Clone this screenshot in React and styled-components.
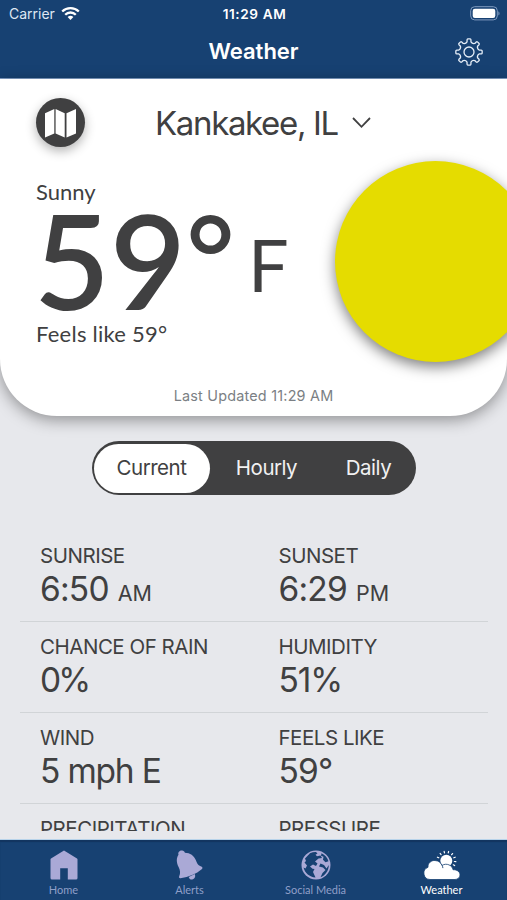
import React from 'react';
import styled, { createGlobalStyle, css } from 'styled-components';

const GlobalStyle = createGlobalStyle`
  * { box-sizing: border-box; }
  body { margin: 0; background: #e7e8ec; }
`;

const ink = '#404041';
const navy = '#174172';

const Screen = styled.div`
  width: 507px;
  height: 900px;
  display: flex;
  flex-direction: column;
  overflow: hidden;
  background: #e7e8ec;
  color: ${ink};
  font-family: Inter, "Liberation Sans", sans-serif;
  white-space: nowrap;
`;

const Header = styled.header`
  height: 79px;
  background: ${navy};
  border-bottom: 1px solid #7f9cc4;
  color: #fff;
  flex: none;
`;

const StatusBar = styled.div`
  height: 27px;
  display: grid;
  grid-template-columns: 1fr auto 1fr;
  align-items: center;
  padding: 0 7px 0 9px;
  font-size: 14px;
`;

const Carrier = styled.div`
  display: flex;
  align-items: center;
  gap: 6px;
  color: #dfe7f2;
`;

const Clock = styled.div`
  font-size: 13.6px;
  font-weight: 600;
  letter-spacing: 0.6px;
`;

const BatterySlot = styled.div`
  display: flex;
  justify-content: flex-end;
`;

const NavBar = styled.div`
  height: 50px;
  display: grid;
  grid-template-columns: 1fr auto 1fr;
  align-items: center;
  padding: 0 24px;
`;

const NavTitle = styled.h1`
  grid-column: 2;
  margin: 0 0 2px;
  font-size: 22px;
  line-height: 48px;
  font-weight: 600;
`;

const IconButton = styled.button`
  justify-self: end;
  display: flex;
  padding: 0;
  border: 0;
  background: none;
  color: #e6eef8;
`;

const Card = styled.section`
  height: 337px;
  flex: none;
  display: flex;
  flex-direction: column;
  padding-top: 19px;
  background: #fff;
  border-radius: 0 0 57px 57px;
  box-shadow: 0 4px 16px rgba(0, 0, 0, 0.38);
`;

const LocationRow = styled.div`
  height: 49px;
  display: flex;
  align-items: center;
  padding-left: 36px;
`;

const MapButton = styled.button`
  width: 49px;
  height: 49px;
  display: grid;
  place-items: center;
  padding: 1px 0 0;
  border: 0;
  border-radius: 50%;
  background: ${ink};
  box-shadow: 0 4px 11px rgba(0, 0, 0, 0.3);
`;

const Location = styled.div`
  display: flex;
  align-items: center;
  gap: 14px;
  margin-left: 70px;
  font-size: 33px;
  letter-spacing: -1.35px;
`;

const Conditions = styled.div`
  height: 201px;
  margin-top: 14px;
  display: grid;
  grid-template-columns: 299px 201px;
  padding-left: 36px;
`;

const Readings = styled.div`
  padding-top: 18px;
  font-family: Lato, "Liberation Sans", sans-serif;
`;

const Summary = styled.div`
  font-size: 22px;
  line-height: 26px;
  letter-spacing: ${(p) => p.$track}px;
`;

const Temperature = styled.div`
  height: 110px;
  margin: 0 0 6px -2px;
  display: flex;
  align-items: center;
  font-size: 131px;
  line-height: 110px;
  font-weight: 600;
`;

const Degree = styled.span`
  margin-bottom: 9px;
  font-size: 118px;
`;

const Unit = styled.span`
  margin: 8px 0 0 13px;
  font-size: 72px;
  line-height: 72px;
  font-weight: 400;
`;

const Sun = styled.div`
  width: 201px;
  height: 201px;
  border-radius: 50%;
  background: #e5dc00;
  box-shadow: 0 5px 14px rgba(0, 0, 0, 0.5);
`;

const Updated = styled.div`
  margin-top: 23px;
  line-height: 22px;
  text-align: center;
  font-size: 14.4px;
  letter-spacing: 0.21px;
  color: #7b7f84;
`;

const Segments = styled.div`
  width: 324px;
  height: 54px;
  flex: none;
  align-self: center;
  margin: 25px 0 36px;
  display: grid;
  grid-template-columns: 116px 114px 90px;
  padding: 2.5px 2px;
  border-radius: 27px;
  background: ${ink};
`;

const Segment = styled.button`
  padding: 0 0 2px;
  border: 0;
  border-radius: 25px;
  background: none;
  color: #f1f1f1;
  font: 400 20.5px Inter, "Liberation Sans", sans-serif;
  letter-spacing: -0.5px;
  ${(p) => p.$active && css`
    background: #fff;
    color: ${ink};
  `}
`;

const Details = styled.div`
  height: 300px;
  flex: none;
  overflow: hidden;
  margin: 0 19px 0 20px;
`;

const DetailRow = styled.div`
  height: 91px;
  display: grid;
  grid-template-columns: 238.5px 1fr;
  padding: 13px 0 0 20px;
  border-bottom: 1px solid #d1d4d7;
`;

const Label = styled.div`
  font-size: 20.5px;
  line-height: 24px;
  letter-spacing: -0.48px;
`;

const Value = styled.div`
  font-size: 33.5px;
  line-height: 42px;
  letter-spacing: ${(p) => p.$track ?? -0.8}px;
`;

const Meridiem = styled.span`
  margin-left: 9px;
  font-size: 21.5px;
  letter-spacing: 0;
`;

const TabBar = styled.nav`
  height: 61px;
  margin-top: auto;
  flex: none;
  display: grid;
  grid-template-columns: repeat(4, 126px);
  padding-left: 0.5px;
  background: ${navy};
  border-top: 1px solid #b8d3ea;
  box-shadow: inset 0 2px 1px #123560;
`;

const Tab = styled.a`
  display: flex;
  flex-direction: column;
  align-items: center;
  padding-top: 10px;
  color: ${(p) => (p.$active ? '#fff' : '#aaa9d6')};
`;

const TabIcon = styled.span`
  height: 32px;
  display: flex;
  align-items: flex-start;
`;

const TabLabel = styled.span`
  font: 400 11px/16px Lato, "Liberation Sans", sans-serif;
  color: ${(p) => (p.$active ? '#fff' : '#8f9fc8')};
`;

const WifiIcon = () => (
  <svg width="19" height="15" viewBox="0 0 19 15" fill="none" stroke="#fff" strokeWidth="2.3">
    <path d="M1.2 5.5a11.8 11.8 0 0 1 16.6 0" />
    <path d="M4.2 8.7a7.5 7.5 0 0 1 10.6 0" />
    <path d="M9.5 14 6.6 11.1a4.1 4.1 0 0 1 5.8 0Z" fill="#fff" stroke="none" />
  </svg>
);

const BatteryIcon = () => (
  <svg width="30" height="15" viewBox="0 0 30 15">
    <rect x="0.7" y="0.7" width="26.6" height="13.2" rx="4" fill="none" stroke="#7f9abf" />
    <rect x="2.7" y="2.7" width="22.6" height="9.2" rx="2.2" fill="#fff" />
    <path d="M28.4 5.2c1.5.8 1.5 3.6 0 4.4Z" fill="#7f9abf" />
  </svg>
);

const gearPath = (() => {
  const pt = (r, deg) => {
    const a = (deg * Math.PI) / 180;
    return `${(14 + r * Math.sin(a)).toFixed(2)} ${(14 - r * Math.cos(a)).toFixed(2)}`;
  };
  let d = '';
  for (let i = 0; i < 8; i += 1) {
    const c = i * 45;
    d += `${i ? 'L' : 'M'}${pt(10.3, c - 11)}L${pt(12.4, c - 9)}Q${pt(13.2, c - 8)} ${pt(13.2, c - 5)}`;
    d += `L${pt(13.2, c + 5)}Q${pt(13.2, c + 8)} ${pt(12.4, c + 9)}L${pt(10.3, c + 11)}`;
    d += `Q${pt(8.6, c + 22.5)} ${pt(10.3, c + 34)}`;
  }
  return `${d}Z`;
})();

const GearIcon = () => (
  <svg width="28" height="28" viewBox="0 0 28 28" fill="none" stroke="currentColor" strokeWidth="1.3" strokeLinejoin="round">
    <path d={gearPath} />
    <circle cx="14" cy="14" r="5" />
  </svg>
);

const MapIcon = () => (
  <svg width="33" height="31" viewBox="0 0 33 31" fill="#fff">
    <path d="M1 5.2 10.3 1v24.4L1 29.6Z" />
    <path d="M11.6 1 20.7 5.2v24.4l-9.1-4.2Z" />
    <path d="M22.5 5.2 32 1v24.4l-9.5 4.2Z" />
  </svg>
);

const ChevronIcon = () => (
  <svg width="19" height="12" viewBox="0 0 19 12" fill="none" stroke={ink} strokeWidth="1.8">
    <path d="m1 1 8.5 8.8L18 1" />
  </svg>
);

const HomeIcon = () => (
  <svg width="28" height="30" viewBox="0 0 28 30" fill="currentColor">
    <path d="M14 .5 27 8.6a1 1 0 0 1 .5 1V28a1.5 1.5 0 0 1-1.5 1.5h-8.2V18.3h-7.6v11.2H2A1.5 1.5 0 0 1 .5 28V9.6a1 1 0 0 1 .5-1Z" />
  </svg>
);

const BellIcon = () => (
  <svg width="27" height="30" viewBox="0 0 27 30" fill="currentColor">
    <path d="M2.5 4.7C1.6 2.2 4 .3 6.1.6c1.5.1 2.3 1 2.8 2.1 5.3.1 9.2 3 11 7.5 1.3 3.5 2.2 5 5.3 6.2 1.5.6 1.6 1.6.8 2.5C20 24 13 27 4.5 28.2c-1.2.1-1.8-.8-1.3-2 1.4-3.3 1-5.8-.5-9C.3 12.3.2 8 2.5 4.7Z" />
    <path d="M12.7 26.900c2.2-.7 4.2-1.6 6-2.8 1.3 2.5-.1 5.3-2.6 5.4-1.8.1-3-1-3.400-2.600Z" />
  </svg>
);

const GlobeIcon = () => (
  <svg width="30" height="30" viewBox="0 0 30 30">
    <circle cx="15" cy="15" r="14.5" fill="currentColor" />
    <g fill={navy}>
      <path d="M9 3.3c2-.9 4-1.3 6-1.2l1.500 1.500-2 1.200 1.500 1.500 3.500-.8 1.500 2.500-3.500.5-3.500 3 2.500 2-1.500 2.500-3-1.500-3 2 2.500 2.200 2 .3-1.500 3 2.500 5.500c-6-.5-10.500-4.300-12-10l2 1 1.500-3-2.500-3 1.500-1.500-1-2.500Z" />
      <path d="M20.500 3.300c3.500 1.500 6 4.600 7 8l-3 1-2.500-2.500.5-3-2.500-1Z" />
      <path d="M27.800 15c0 5.700-3.500 10.500-8.300 12.200l2-4.200 3-3-2.500-2.500-4-1 1.500-3 3.500 1.500 2.500 3.500Z" />
    </g>
  </svg>
);

const sunRays = [-95, -68, -40, -13, 14, 41, 68, 95, 120];

const WeatherIcon = () => (
  <svg width="38" height="31" viewBox="0 0 38 31">
    <g stroke="#fff" strokeWidth="1.2" strokeLinecap="round">
      {sunRays.map((a) => (
        <path key={a} d="M23.300 1.200v1.500" transform={`rotate(${a} 23.3 10.8)`} />
      ))}
    </g>
    <circle cx="23.3" cy="10.8" r="6" fill="#fff" />
    <path
      d="M7 29.5a6.300 6.300 0 0 1-2-12.200c-.3-4.300 3.300-7.100 7-6.800 3.400.2 5.800 2 7 4.900 4.600-2.800 10.300-.1 11 4.300 4-.2 7 2 7 5.200 0 2.700-2.300 4.600-5 4.600Z"
      fill="#fff"
      stroke={navy}
      strokeWidth=".8"
    />
    <path d="M19 15.400c.6.900.9 1.800.9 2.700" fill="none" stroke={navy} strokeWidth=".9" />
  </svg>
);

const details = [
  [
    { label: 'SUNRISE', value: '6:50', suffix: 'AM' },
    { label: 'SUNSET', value: '6:29', suffix: 'PM' },
  ],
  [
    { label: 'CHANCE OF RAIN', value: '0%', track: -3 },
    { label: 'HUMIDITY', value: '51%', track: -1.1 },
  ],
  [
    { label: 'WIND', value: '5 mph E', track: -1.2 },
    { label: 'FEELS LIKE', value: '59°' },
  ],
  [
    { label: 'PRECIPITATION' },
    { label: 'PRESSURE' },
  ],
];

const tabs = [
  { label: 'Home', Icon: HomeIcon },
  { label: 'Alerts', Icon: BellIcon },
  { label: 'Social Media', Icon: GlobeIcon },
  { label: 'Weather', Icon: WeatherIcon, active: true },
];

export default function App() {
  return (
    <Screen>
      <GlobalStyle />
      <Header>
        <StatusBar>
          <Carrier>Carrier <WifiIcon /></Carrier>
          <Clock>11:29 AM</Clock>
          <BatterySlot><BatteryIcon /></BatterySlot>
        </StatusBar>
        <NavBar>
          <NavTitle>Weather</NavTitle>
          <IconButton aria-label="Settings"><GearIcon /></IconButton>
        </NavBar>
      </Header>
      <Card>
        <LocationRow>
          <MapButton aria-label="Map"><MapIcon /></MapButton>
          <Location>Kankakee, IL <ChevronIcon /></Location>
        </LocationRow>
        <Conditions>
          <Readings>
            <Summary $track={0}>Sunny</Summary>
            <Temperature>59<Degree>°</Degree><Unit>F</Unit></Temperature>
            <Summary $track={0.25}>Feels like 59°</Summary>
          </Readings>
          <Sun />
        </Conditions>
        <Updated>Last Updated 11:29 AM</Updated>
      </Card>
      <Segments>
        <Segment $active>Current</Segment>
        <Segment>Hourly</Segment>
        <Segment>Daily</Segment>
      </Segments>
      <Details>
        {details.map((row) => (
          <DetailRow key={row[0].label}>
            {row.map((d) => (
              <div key={d.label}>
                <Label>{d.label}</Label>
                {d.value && (
                  <Value $track={d.track}>
                    {d.value}
                    {d.suffix && <Meridiem>{d.suffix}</Meridiem>}
                  </Value>
                )}
              </div>
            ))}
          </DetailRow>
        ))}
      </Details>
      <TabBar>
        {tabs.map(({ label, Icon, active }) => (
          <Tab key={label} $active={active}>
            <TabIcon><Icon /></TabIcon>
            <TabLabel $active={active}>{label}</TabLabel>
          </Tab>
        ))}
      </TabBar>
    </Screen>
  );
}
